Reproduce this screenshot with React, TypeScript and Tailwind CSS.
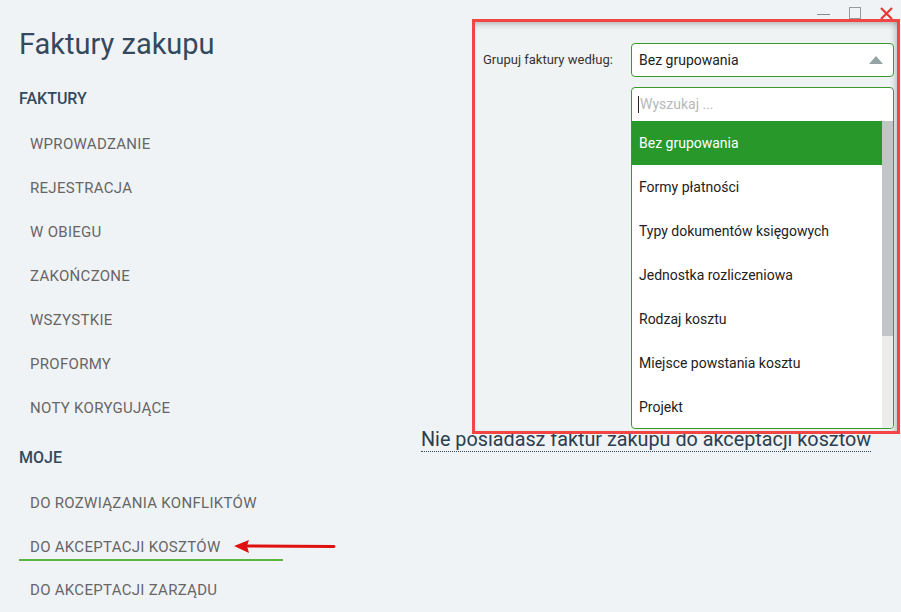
import React from "react";

const navFaktury = [
  "WPROWADZANIE",
  "REJESTRACJA",
  "W OBIEGU",
  "ZAKOŃCZONE",
  "WSZYSTKIE",
  "PROFORMY",
  "NOTY KORYGUJĄCE",
];

const options = [
  "Bez grupowania",
  "Formy płatności",
  "Typy dokumentów księgowych",
  "Jednostka rozliczeniowa",
  "Rodzaj kosztu",
  "Miejsce powstania kosztu",
  "Projekt",
];

function NavItem({ children }: { children: React.ReactNode }) {
  return (
    <div className="flex h-11 items-center pl-[30px] text-[15px] tracking-[0.3px] text-[#666666]">
      {children}
    </div>
  );
}

function SectionHeader({ children }: { children: React.ReactNode }) {
  return (
    <div className="flex h-11 items-center pl-[19px] text-[16px] font-medium text-[#34495e]">
      {children}
    </div>
  );
}

function WindowControls() {
  return (
    <div className="flex h-[26px] items-center justify-end gap-[19px] pr-[8px]">
      <div className="mt-[2px] h-[1px] w-[13px] bg-[#8a8a8a]" />
      <div className="h-[12px] w-[12px] border border-[#9a9a9a]" />
      <svg width="13" height="13" viewBox="0 0 13 13">
        <path d="M1 1 L12 12 M12 1 L1 12" stroke="#e53935" strokeWidth="2.2" />
      </svg>
    </div>
  );
}

function GroupingPopup() {
  return (
    <div className="absolute left-[472px] top-[19px] h-[415px] w-[428px] border-[3px] border-[#f44545] bg-[#f0f3f4] shadow-[inset_0_6px_6px_-4px_rgba(0,0,0,0.25),inset_-6px_0_6px_-4px_rgba(0,0,0,0.2)]">
      <div className="flex pl-[8px] pt-[21px]">
        <div className="flex h-[34px] w-[148px] items-center text-[13px] text-[#333333]">
          Grupuj faktury według:
        </div>
        <div className="flex w-[263px] flex-col gap-[10px]">
          <div className="flex h-[34px] items-center justify-between rounded-[4px] border border-[#3a9a2e] bg-white pl-[7px] pr-[10px] text-[14px] text-[#222222]">
            <span>Bez grupowania</span>
            <svg width="14" height="8" viewBox="0 0 14 8">
              <path d="M7 0 L14 8 L0 8 Z" fill="#95a3a6" />
            </svg>
          </div>
          <div className="flex h-[342px] flex-col overflow-hidden rounded-[4px] border border-[#3a9a2e] bg-white">
            <div className="flex h-[33px] flex-none items-center pl-[6px] text-[14px] text-[#b8b8b8]">
              <div className="mr-[1px] h-[17px] w-[1px] bg-[#222222]" />
              Wyszukaj ...
            </div>
            <div className="flex flex-1 overflow-hidden">
              <div className="flex flex-1 flex-col">
                {options.map((o, i) => (
                  <div
                    key={o}
                    className={
                      i === 0
                        ? "flex h-11 flex-none items-center bg-[#28982a] pl-[7px] text-[14px] text-white"
                        : "flex h-11 flex-none items-center pl-[7px] text-[14px] text-[#222222]"
                    }
                  >
                    {o}
                  </div>
                ))}
              </div>
              <div className="flex w-[11px] flex-col bg-[#ececec]">
                <div className="h-[215px] bg-[#c1c5c8]" />
              </div>
            </div>
          </div>
        </div>
      </div>
    </div>
  );
}

export default function App() {
  return (
    <div
      className="relative flex h-[612px] w-[901px] overflow-hidden bg-[#f0f3f5]"
      style={{ fontFamily: "Roboto, 'Liberation Sans', sans-serif" }}
    >
      <div className="flex w-[400px] flex-none flex-col">
        <div className="flex h-[78px] items-start pl-[19px] pt-[26px] text-[29px] leading-[36px] text-[#34495e]">
          Faktury zakupu
        </div>
        <SectionHeader>FAKTURY</SectionHeader>
        <div className="mt-[1px]">
          {navFaktury.map((n) => (
            <NavItem key={n}>{n}</NavItem>
          ))}
        </div>
        <div className="mt-[6px]">
          <SectionHeader>MOJE</SectionHeader>
        </div>
        <div className="mt-[1px]">
          <NavItem>DO ROZWIĄZANIA KONFLIKTÓW</NavItem>
        </div>
        <div className="relative h-11">
          <div className="ml-[19px] h-[36px] w-[264px] border-b-2 border-[#5ab641] pl-[11px] pt-[12px] text-[15px] leading-[20px] tracking-[0.3px] text-[#666666]">
            DO AKCEPTACJI KOSZTÓW
          </div>
          <svg
            className="absolute left-[234px] top-[15px]"
            width="104"
            height="14"
            viewBox="0 0 104 14"
          >
            <path d="M100 6.5 L14 6" stroke="#e01010" strokeWidth="3" strokeLinecap="round" />
            <path d="M0 6 L15 0 L13 6 L15 13 Z" fill="#e01010" />
          </svg>
        </div>
        <NavItem>DO AKCEPTACJI ZARZĄDU</NavItem>
      </div>
      <div className="flex flex-1 flex-col">
        <WindowControls />
        <div className="pl-[21px] pt-[402px]">
          <span className="border-b border-dotted border-[#34495e] text-[19.8px] leading-[24px] text-[#2c3e50]">
            Nie posiadasz faktur zakupu do akceptacji kosztów
          </span>
        </div>
      </div>
      <GroupingPopup />
    </div>
  );
}
